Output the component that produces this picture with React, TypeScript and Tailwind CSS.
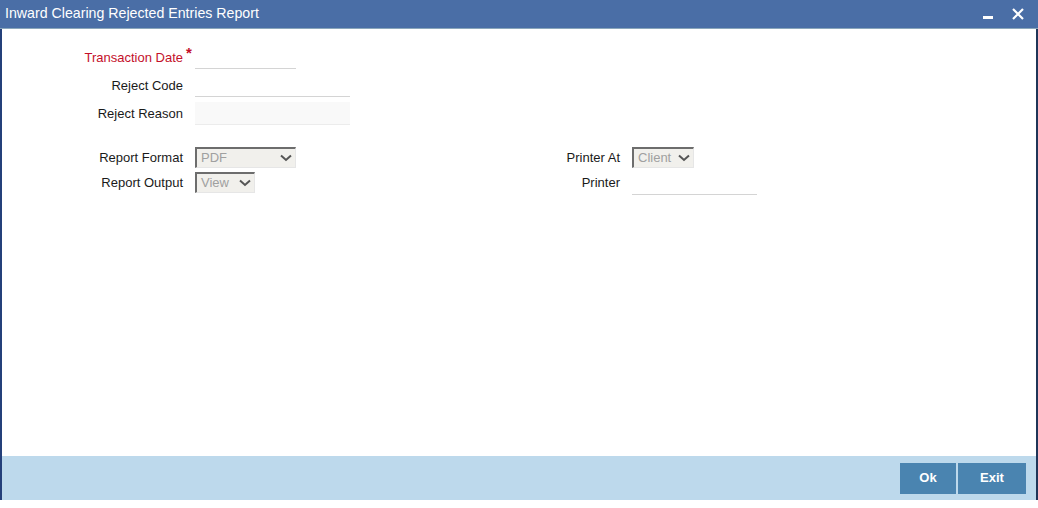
import React from "react";

const Chevron = () => (
  <svg width="12" height="8" viewBox="0 0 12 8" className="shrink-0">
    <path d="M1 1.5 L6 6 L11 1.5" fill="none" stroke="#555" strokeWidth="2" />
  </svg>
);

const Select = ({ value, width }: { value: string; width: string }) => (
  <div
    className={`${width} h-[21px] flex items-center justify-between pl-[4px] pr-[3px] bg-[#f1f0ec] border-t-2 border-l-2 border-t-[#6d6d6d] border-l-[#6d6d6d] border-b border-r border-b-[#e6e6e6] border-r-[#e6e6e6] text-[#a0a0a0] text-[13px]`}
  >
    <span>{value}</span>
    <Chevron />
  </div>
);

const Label = ({ children, red }: { children: React.ReactNode; red?: boolean }) => (
  <div className={`w-[181px] text-right text-[13px] ${red ? "text-[#c4102a]" : "text-[#1a1a1a]"}`}>
    {children}
  </div>
);

export default function App() {
  return (
    <div className="w-[1038px] h-[508px] bg-white flex flex-col font-['Liberation_Sans',Arial,sans-serif]">
      <div className="h-[29px] bg-[#4a6ea6] border-b border-b-[#8aa6bb] flex items-center justify-between pl-[5px] pr-[14px]">
        <span className="text-white text-[14.2px]">Inward Clearing Rejected Entries Report</span>
        <div className="flex items-center gap-[19px]">
          <div className="w-[10px] h-[3px] bg-white mt-[6px]" />
          <svg width="12" height="12" viewBox="0 0 12 12">
            <path d="M1 1 L11 11 M11 1 L1 11" stroke="white" strokeWidth="2.2" />
          </svg>
        </div>
      </div>
      <div className="flex-1 flex flex-col border-l-2 border-l-[#24407a] border-r-2 border-r-[#1f3558]">
        <div className="flex-1 flex flex-col pt-[17px]">
          <div className="flex items-center h-[23px]">
            <Label red>Transaction Date</Label>
            <span className="text-[#c4102a] text-[15px] font-bold w-[12px] self-start -mt-[4px] pl-[3px]">*</span>
            <div className="w-[101px] h-[23px] border-b border-b-[#d4d4d4]" />
          </div>
          <div className="flex items-center h-[23px] mt-[5px]">
            <Label>Reject Code</Label>
            <span className="w-[12px]" />
            <div className="w-[155px] h-[23px] border-b border-b-[#d4d4d4]" />
          </div>
          <div className="flex items-center h-[23px] mt-[5px]">
            <Label>Reject Reason</Label>
            <span className="w-[12px]" />
            <div className="w-[155px] h-[23px] bg-[#f9f9f9] border-b border-b-[#ececec]" />
          </div>
          <div className="flex mt-[22px]">
            <div className="flex flex-col gap-[4px]">
              <div className="flex items-center h-[21px]">
                <Label>Report Format</Label>
                <span className="w-[12px]" />
                <Select value="PDF" width="w-[101px]" />
              </div>
              <div className="flex items-center h-[21px]">
                <Label>Report Output</Label>
                <span className="w-[12px]" />
                <Select value="View" width="w-[60px]" />
              </div>
            </div>
            <div className="flex flex-col gap-[4px] ml-[192px]">
              <div className="flex items-center h-[21px]">
                <div className="w-[132px] text-right text-[13px] text-[#1a1a1a]">Printer At</div>
                <span className="w-[12px]" />
                <Select value="Client" width="w-[62px]" />
              </div>
              <div className="flex items-center h-[21px]">
                <div className="w-[132px] text-right text-[13px] text-[#1a1a1a]">Printer</div>
                <span className="w-[12px]" />
                <div className="w-[125px] h-[22px] border-b border-b-[#d4d4d4] mt-[2px]" />
              </div>
            </div>
          </div>
        </div>
        <div className="h-[44px] bg-[#bdd9ec] flex items-center justify-end pr-[10px] gap-[2px]">
          <button className="w-[56px] h-[31px] bg-[#4a84b0] text-white text-[13px] font-bold">Ok</button>
          <button className="w-[68px] h-[31px] bg-[#4a84b0] text-white text-[13px] font-bold">Exit</button>
        </div>
      </div>
      <div className="h-[8px] bg-white" />
    </div>
  );
}
